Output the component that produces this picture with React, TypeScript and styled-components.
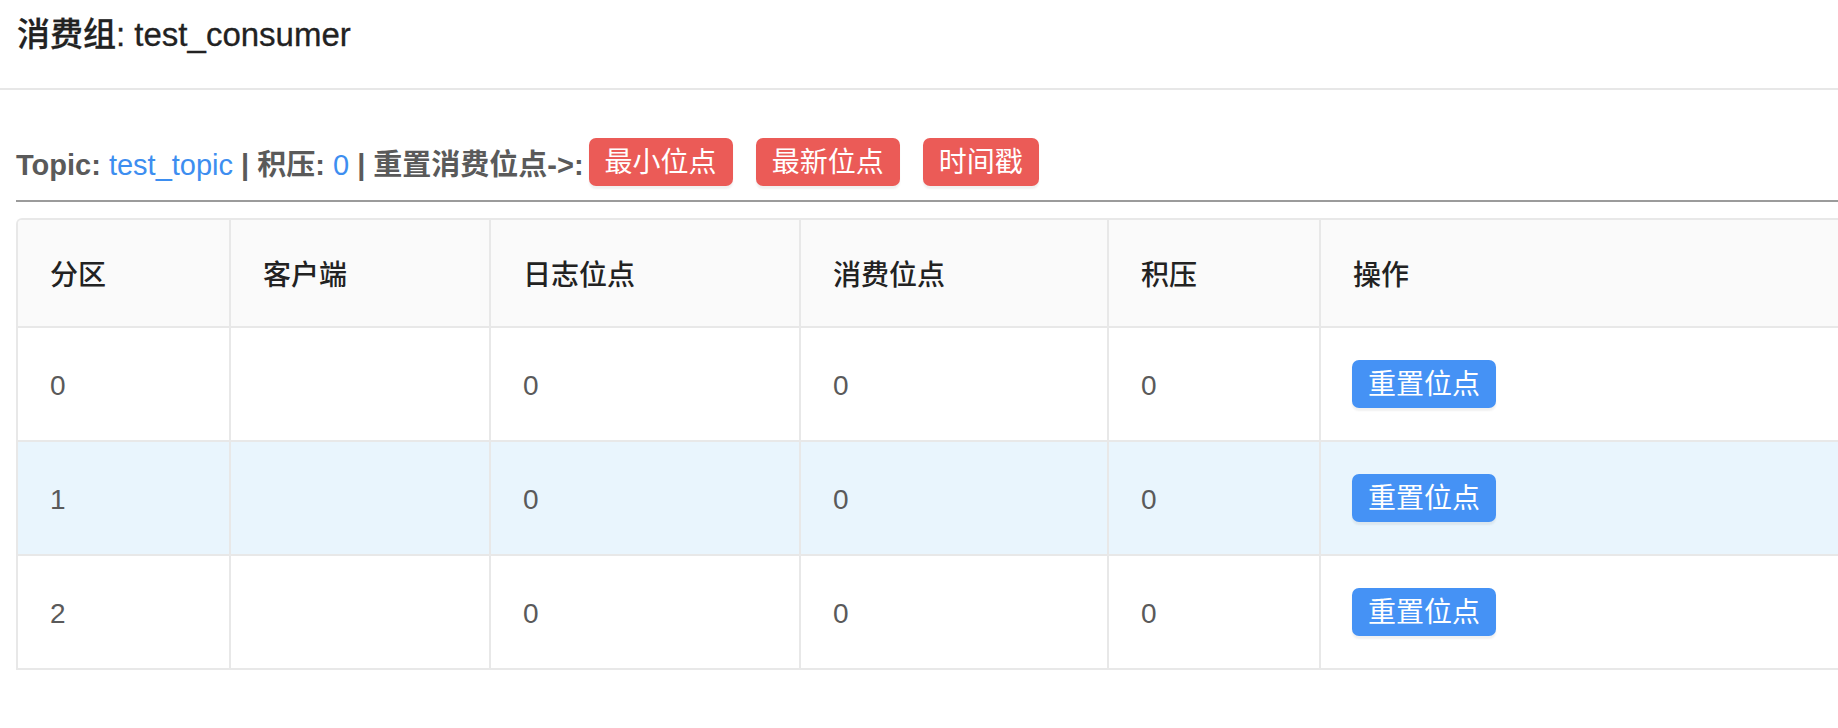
import React from "react";
import styled, { createGlobalStyle } from "styled-components";

const GlobalStyle = createGlobalStyle`
  html, body {
    margin: 0;
    padding: 0;
    background: #ffffff;
    overflow: hidden;
  }
  body {
    font-family: "Liberation Sans", "Noto Sans CJK SC", sans-serif;
  }
  * { box-sizing: border-box; }
`;

const Page = styled.div`
  width: 100%;
`;

const Header = styled.header`
  height: 90px;
  border-bottom: 2px solid #e7e7e7;
  padding: 15px 0 0 17px;
`;

const Title = styled.h1`
  margin: 0;
  font-size: 33px;
  line-height: 40px;
  font-weight: 500;
  color: #222222;
  -webkit-text-stroke: 0.3px #222222;
`;

const Content = styled.main`
  padding-left: 16px;
  margin-right: -40px;
`;

const TopicBar = styled.div`
  margin-top: 48px;
  height: 48px;
  display: flex;
  align-items: center;
`;

const Info = styled.div`
  font-size: 29px;
  font-weight: 700;
  color: #5a5a5a;
  white-space: pre;
  margin-right: 5px;
`;

const Link = styled.span`
  font-weight: 400;
  color: #3d8ef0;
`;

const Actions = styled.div`
  display: flex;
  gap: 23px;
`;

const Button = styled.button<{ $tone: "danger" | "primary" }>`
  height: 48px;
  padding: 2px 16px 0;
  border: none;
  border-radius: 7px;
  background: ${(p) => (p.$tone === "danger" ? "#eb5b57" : "#4592f5")};
  color: #ffffff;
  font-family: "Liberation Sans", "Noto Sans CJK SC", sans-serif;
  font-size: 28px;
  line-height: 46px;
  font-weight: 400;
  box-shadow: 0 3px 2px rgba(0, 0, 0, 0.06);
  cursor: pointer;
`;

const Divider = styled.div`
  margin-top: 14px;
  height: 2px;
  background: #9b9b9b;
`;

const Table = styled.div`
  margin-top: 16px;
  border-top: 2px solid #e8e8e8;
  border-left: 2px solid #e8e8e8;
  border-top-left-radius: 6px;
  overflow: hidden;
`;

const Row = styled.div<{ $head?: boolean; $hover?: boolean }>`
  display: grid;
  grid-template-columns: 213px 260px 310px 308px 212px 1fr;
  border-bottom: 2px solid #e8e8e8;
  background: ${(p) => (p.$head ? "#fafafa" : p.$hover ? "#e9f5fd" : "#ffffff")};
`;

const Cell = styled.div<{ $head?: boolean; $action?: boolean }>`
  height: ${(p) => (p.$head ? "106px" : "112px")};
  border-right: 2px solid #e8e8e8;
  padding-left: ${(p) => (p.$action ? "31px" : "32px")};
  padding-top: ${(p) => (p.$head || p.$action ? "0" : "4px")};
  display: flex;
  align-items: center;
  font-size: 28px;
  font-weight: ${(p) => (p.$head ? 500 : 400)};
  color: ${(p) => (p.$head ? "#222222" : "#5a5a5a")};
`;

const columns = ["分区", "客户端", "日志位点", "消费位点", "积压", "操作"];

const rows = [
  { partition: 0, client: "", logOffset: 0, consumerOffset: 0, lag: 0 },
  { partition: 1, client: "", logOffset: 0, consumerOffset: 0, lag: 0 },
  { partition: 2, client: "", logOffset: 0, consumerOffset: 0, lag: 0 },
];

export default function App() {
  return (
    <Page>
      <GlobalStyle />
      <Header>
        <Title>消费组: test_consumer</Title>
      </Header>
      <Content>
        <TopicBar>
          <Info>
            Topic: <Link>test_topic</Link> | 积压: <Link>0</Link> | 重置消费位点-&gt;:
          </Info>
          <Actions>
            <Button $tone="danger">最小位点</Button>
            <Button $tone="danger">最新位点</Button>
            <Button $tone="danger">时间戳</Button>
          </Actions>
        </TopicBar>
        <Divider />
        <Table>
          <Row $head>
            {columns.map((c) => (
              <Cell $head key={c}>
                {c}
              </Cell>
            ))}
          </Row>
          {rows.map((r, i) => (
            <Row key={r.partition} $hover={i === 1}>
              <Cell>{r.partition}</Cell>
              <Cell>{r.client}</Cell>
              <Cell>{r.logOffset}</Cell>
              <Cell>{r.consumerOffset}</Cell>
              <Cell>{r.lag}</Cell>
              <Cell $action>
                <Button $tone="primary">重置位点</Button>
              </Cell>
            </Row>
          ))}
        </Table>
      </Content>
    </Page>
  );
}
